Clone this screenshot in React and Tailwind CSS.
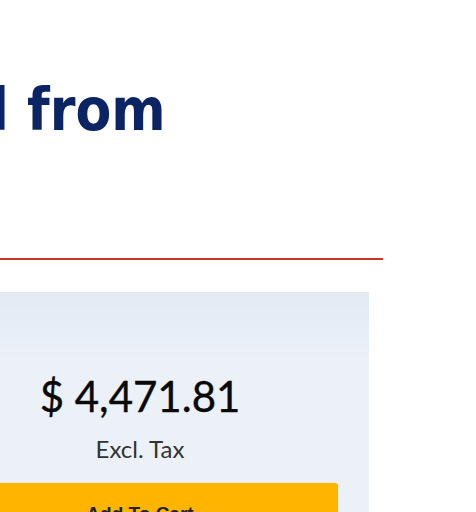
export default function App() {
  return (
    <div className="w-[476px] h-[512px] overflow-hidden bg-white">
      <div className="ml-[-89px] w-[472px]">
        <h1
          className="pt-[81px] pl-[80px] text-[58px] leading-none font-bold text-[#0b2463] whitespace-nowrap"
          style={{ fontFamily: '"DejaVu Sans Condensed", "DejaVu Sans", sans-serif', fontStretch: 'condensed' }}
        >
          l from
        </h1>
        <div className="mt-[119px] h-[2px] bg-[#c9352a]" />
        <div
          className="mt-[32px] w-[458px] bg-[#ecf1f8] flex flex-col items-center"
          style={{ fontFamily: 'Lato, "Open Sans", sans-serif' }}
        >
          <div className="h-[66px] w-full bg-linear-to-b from-[#e2eaf4] to-[#ebf0f8]" />
          <div className="pt-[17px] text-[42px] leading-none text-[#0a0a0a] [-webkit-text-stroke:0.4px_#0a0a0a]">
            $ 4,471.81
          </div>
          <div className="mt-[20px] text-[24px] leading-none text-[#333]">Excl. Tax</div>
          <button
            className="mt-[22px] w-[396px] h-[44px] rounded-[3px] bg-[#ffb400] text-[19px] font-bold text-[#222] flex justify-center pt-[21px] leading-none"
            style={{ fontFamily: '"Liberation Sans", Arial, sans-serif' }}
          >
            Add To Cart
          </button>
        </div>
      </div>
    </div>
  )
}
